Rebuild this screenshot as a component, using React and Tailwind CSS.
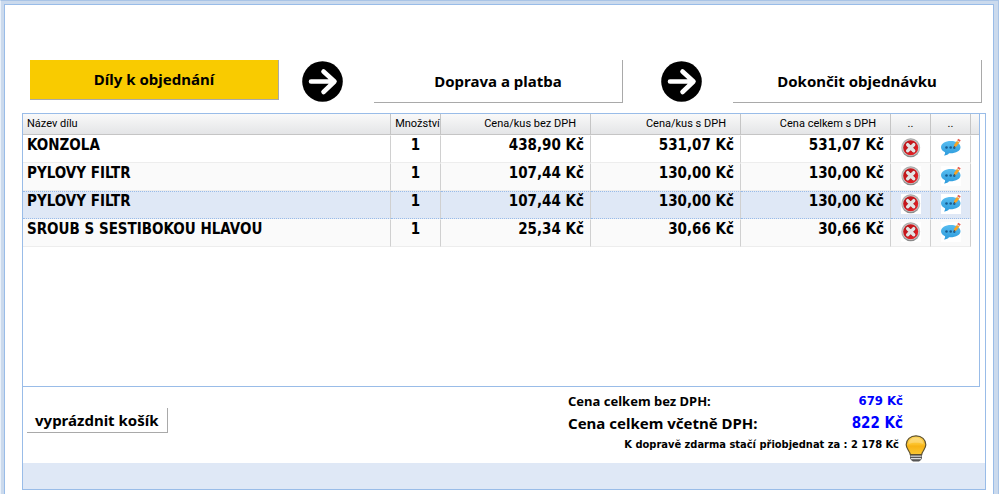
import { useState } from 'react';
import clsx from 'clsx';

const steps = ['Díly k objednání', 'Doprava a platba', 'Dokončit objednávku'];

const items = [
  { id: 1, name: 'KONZOLA', qty: 1, net: '438,90 Kč', gross: '531,07 Kč', total: '531,07 Kč' },
  { id: 2, name: 'PYLOVY FILTR', qty: 1, net: '107,44 Kč', gross: '130,00 Kč', total: '130,00 Kč' },
  { id: 3, name: 'PYLOVY FILTR', qty: 1, net: '107,44 Kč', gross: '130,00 Kč', total: '130,00 Kč' },
  { id: 4, name: 'SROUB S SESTIBOKOU HLAVOU', qty: 1, net: '25,34 Kč', gross: '30,66 Kč', total: '30,66 Kč' },
];

const columns = [
  { label: 'Název dílu', align: 'pl-1 text-left' },
  { label: 'Množství', align: 'pl-1 text-center' },
  { label: 'Cena/kus bez DPH', align: 'pr-3.5 text-right' },
  { label: 'Cena/kus s DPH', align: 'pr-3.5 text-right' },
  { label: 'Cena celkem s DPH', align: 'pr-3.5 text-right' },
  { label: '..', align: 'text-center' },
  { label: '..', align: 'text-center' },
];

function ArrowCircle({ className }) {
  return (
    <svg viewBox="0 0 41 41" className={clsx('mt-px h-[41px] w-[41px] shrink-0', className)} aria-hidden="true">
      <circle cx="20.5" cy="20.5" r="20.3" fill="#000" />
      <path d="M9 20.5H32M21.5 10.5L32.5 20.5L21.5 31" fill="none" stroke="#fff" strokeWidth="4.6" strokeLinecap="round" strokeLinejoin="round" />
    </svg>
  );
}

function RemoveIcon() {
  return (
    <svg viewBox="0 0 20 20" className="h-5 w-5" aria-hidden="true">
      <defs>
        <linearGradient id="ring" x1="0" y1="0" x2="0" y2="1">
          <stop offset="0" stopColor="#a5a5a5" />
          <stop offset="0.5" stopColor="#c4c4c4" />
          <stop offset="1" stopColor="#858585" />
        </linearGradient>
        <linearGradient id="red" x1="0" y1="0" x2="1" y2="1">
          <stop offset="0" stopColor="#b81418" />
          <stop offset="0.5" stopColor="#d0181d" />
          <stop offset="1" stopColor="#f0262b" />
        </linearGradient>
      </defs>
      <circle cx="9.7" cy="9.7" r="9.5" fill="url(#ring)" />
      <circle cx="9.7" cy="9.7" r="8.2" fill="#cfcfcf" />
      <circle cx="9.7" cy="9.7" r="7.5" fill="url(#red)" />
      <path d="M6.7 6.7L12.7 12.7M12.7 6.7L6.7 12.7" stroke="#a01418" strokeWidth="4.2" strokeLinecap="round" />
      <path d="M6.7 6.7L12.7 12.7M12.7 6.7L6.7 12.7" stroke="#e4e4e4" strokeWidth="3.5" strokeLinecap="round" />
    </svg>
  );
}

function CommentIcon() {
  return (
    <svg viewBox="0 0 20 20" className="h-5 w-5" aria-hidden="true">
      <defs>
        <linearGradient id="bubble" x1="0" y1="0" x2="0" y2="1">
          <stop offset="0" stopColor="#58bdf0" />
          <stop offset="1" stopColor="#2d9bdc" />
        </linearGradient>
      </defs>
      <path d="M10 3C4.2 3 0 5.7 0 9.2C0 11.5 1.7 13.2 4 14.2C4.3 15.5 3.7 16.5 3 17.4C5.5 17.3 7 16.5 8 15.2C14.5 15.6 19.5 13 19.5 9.2C19.5 5.6 15.5 3 10 3Z" fill="url(#bubble)" />
      <g fill="#175c92">
        <circle cx="5.5" cy="9.5" r="1.3" />
        <circle cx="9.7" cy="9.5" r="1.3" />
        <circle cx="13.3" cy="9.8" r="1.2" />
      </g>
      <path d="M12.8 9.5L13.2 6.8L16.5 2L19 3.5L15.6 8.3Z" fill="#f6a325" />
      <path d="M16.2 2.3L17.2 0.8L19.7 2.3L18.7 3.9Z" fill="#e85b50" />
      <path d="M15.8 2.9L16.3 2.2L18.8 3.8L18.3 4.5Z" fill="#dfe5e8" />
      <path d="M12.8 9.5L13.1 7.9L14.4 8.8Z" fill="#444" />
    </svg>
  );
}

function BulbIcon() {
  return (
    <svg viewBox="0 0 22 28" className="h-7 w-[22px] shrink-0" aria-hidden="true">
      <defs>
        <linearGradient id="bulb" x1="0" y1="0" x2="0" y2="1">
          <stop offset="0" stopColor="#fbd45c" />
          <stop offset="0.45" stopColor="#fcc22a" />
          <stop offset="0.55" stopColor="#f7b315" />
          <stop offset="1" stopColor="#fbc832" />
        </linearGradient>
      </defs>
      <path d="M5 19.5H17V23L16 25L14 26.4H8L6 25L5 23Z" fill="#555" />
      <path d="M5.5 21.2H16.5M6 23.7H16" stroke="#ddd" strokeWidth="1.2" />
      <path d="M11 0.8C5.3 0.8 1.2 4.7 1.2 9.7C1.2 14 4.8 15.8 5.3 19.6H16.7C17.2 15.8 20.8 14 20.8 9.7C20.8 4.7 16.7 0.8 11 0.8Z" fill="url(#bulb)" stroke="#5d5130" strokeWidth="1.2" />
      <path d="M3.6 9C3.6 5.4 6.7 2.8 11 2.8C15.3 2.8 18.4 5.4 18.4 9C14.3 7.3 7.7 7.3 3.6 9Z" fill="#fff" opacity="0.25" />
    </svg>
  );
}

function Steps() {
  return (
    <nav className="flex items-start pr-[11px] pl-[25px]">
      {steps.map((label, i) => (
        <div key={label} className="contents">
          {i === 1 && <ArrowCircle className="mr-[31px] ml-[23px]" />}
          {i === 2 && <ArrowCircle className="mr-[31px] ml-[38px]" />}
          <button
            type="button"
            className={clsx(
              'flex-1 border-r border-b border-[#a9a9a9] text-[15px] font-bold',
              i === 0 ? 'h-10 bg-[#f9cb00]' : 'h-[43px] bg-white'
            )}
          >
            {label}
          </button>
        </div>
      ))}
    </nav>
  );
}

function ItemRow({ item, odd, selected, onSelect }) {
  const cell = clsx(
    'h-7 border-r border-r-[#d0d0d0] border-y p-0 align-top',
    selected
      ? 'border-y-[#99bbe8] bg-[#dfe8f6] [border-top-style:dotted] [border-bottom-style:dotted]'
      : 'border-t-transparent border-b-[#ededed]',
    !selected && odd && 'bg-[#fafafa]'
  );

  return (
    <tr onClick={onSelect}>
      <td className={clsx(cell, 'pl-1')}>{item.name}</td>
      <td className={clsx(cell, 'text-center')}>{item.qty}</td>
      <td className={clsx(cell, 'pr-1.5 text-right')}>{item.net}</td>
      <td className={clsx(cell, 'pr-1.5 text-right')}>{item.gross}</td>
      <td className={clsx(cell, 'pr-1.5 text-right')}>{item.total}</td>
      <td className={cell}>
        <button type="button" aria-label="Odebrat" className="mx-auto mt-0.5 block h-5 w-5 bg-white">
          <RemoveIcon />
        </button>
      </td>
      <td className={cell}>
        <button type="button" aria-label="Poznámka" className="mx-auto mt-0.5 block h-5 w-5 bg-white">
          <CommentIcon />
        </button>
      </td>
      <td className="p-0" />
    </tr>
  );
}

function ItemTable() {
  const [selected, setSelected] = useState(3);

  return (
    <div className="mr-[5px] min-h-[273px] border-r border-b border-[#99bce8]">
      <table className="w-full table-fixed border-separate border-spacing-0">
        <colgroup>
          <col />
          <col className="w-[50px]" />
          <col className="w-[150px]" />
          <col className="w-[150px]" />
          <col className="w-[150px]" />
          <col className="w-10" />
          <col className="w-10" />
          <col className="w-2" />
        </colgroup>
        <thead className="bg-linear-to-b from-[#f9f9f9] to-[#e3e4e6]">
          <tr className="font-[Roboto,'Noto_Sans',sans-serif] text-[11px] leading-5">
            {columns.map((col, i) => (
              <th key={i} className={clsx('border-r border-b border-[#c5c5c5] py-0 font-normal whitespace-nowrap', col.align)}>
                {col.label}
              </th>
            ))}
            <th className="border-b border-[#c5c5c5] p-0" />
          </tr>
        </thead>
        <tbody className="font-['DejaVu_Sans_Condensed','Noto_Sans',sans-serif] text-[15px] leading-[18px] font-bold">
          {items.map((item, i) => (
            <ItemRow
              key={item.id}
              item={item}
              odd={i % 2 === 1}
              selected={item.id === selected}
              onSelect={() => setSelected(item.id)}
            />
          ))}
        </tbody>
      </table>
    </div>
  );
}

function Summary() {
  return (
    <div className="flex h-[76px] items-start justify-between pr-[58px] pl-1 font-bold">
      <button type="button" className="mt-[21px] h-[25px] border-r border-b border-[#a9a9a9] px-2 text-[15px] leading-6">
        vyprázdnit košík
      </button>
      <div className="w-[359px] pt-1">
        <div className="flex justify-between pr-6 text-[13px] leading-5">
          <span>Cena celkem bez DPH:</span>
          <span className="font-['DejaVu_Sans_Condensed','Noto_Sans',sans-serif] text-[#0000ff]">679 Kč</span>
        </div>
        <div className="flex justify-between pr-6 text-[15px] leading-6">
          <span>Cena celkem včetně DPH:</span>
          <span className="font-['DejaVu_Sans_Condensed','Noto_Sans',sans-serif] text-[#0000ff]">822 Kč</span>
        </div>
        <div className="flex h-5 items-start justify-end gap-1.5 font-['DejaVu_Sans_Condensed','Noto_Sans',sans-serif] text-[11px] leading-5 whitespace-nowrap">
          <span>K dopravě zdarma stačí přiobjednat za : 2 178 Kč</span>
          <BulbIcon />
        </div>
      </div>
    </div>
  );
}

function App() {
  return (
    <div className="mr-px min-h-screen border-x border-t border-[#a9c4e6] border-l-[#eaf1fa] bg-[#cbdaed] px-[3px] pt-[3px] pr-1 font-['Noto_Sans','Open_Sans',sans-serif] text-black">
      <div className="flex min-h-[490px] flex-col border-x border-t border-[#99bce8] bg-white pt-[55px]">
        <Steps />
        <div className="mt-2.5 mr-[7px] ml-[17px] border border-[#99bce8]">
          <ItemTable />
          <Summary />
          <div className="h-[26px] bg-[#dfe8f6]" />
        </div>
      </div>
    </div>
  );
}

export default App;
